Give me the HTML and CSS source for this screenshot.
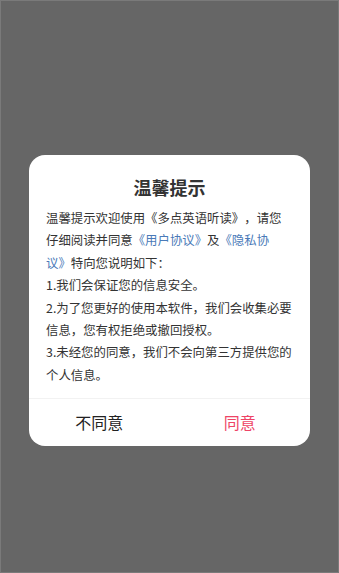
FILE: index.html
```html
<!DOCTYPE html>
<html lang="zh">
<head>
<meta charset="utf-8">
<link rel="stylesheet" href="styles.css">
</head>
<body>
<div class="screen">
  <div class="dialog">
    <h1 class="title">温馨提示</h1>
    <div class="content">
      <p class="para">温馨提示欢迎使用《多点英语听读》，请您仔细阅读并同意<span class="link">《用户协议》</span>及<span class="link">《隐私协议》</span>特向您说明如下：</p>
      <p class="para">1.我们会保证您的信息安全。</p>
      <p class="para">2.为了您更好的使用本软件，我们会收集必要信息，您有权拒绝或撤回授权。</p>
      <p class="para">3.未经您的同意，我们不会向第三方提供您的个人信息。</p>
    </div>
    <div class="actions">
      <div class="btn btn-cancel">不同意</div>
      <div class="btn btn-ok">同意</div>
    </div>
  </div>
</div>
</body>
</html>
```
FILE: styles.css
```css
* { box-sizing: border-box; }
html, body { margin: 0; padding: 0; }
body {
  width: 339px;
  height: 573px;
  background: #666666;
  font-family: "Noto Sans CJK SC", "Noto Sans", sans-serif;
  overflow: hidden;
}
.screen {
  width: 339px;
  height: 573px;
  border: 1px solid #7a7a7a;
  background: #666666;
  padding: 154px 0 0 28px;
}
.dialog {
  width: 281px;
  background: #ffffff;
  border-radius: 16px;
  overflow: hidden;
  display: flex;
  flex-direction: column;
}
.title {
  margin: 0;
  padding-top: 20px;
  font-size: 18px;
  line-height: 24px;
  font-weight: bold;
  color: #333333;
  text-align: center;
}
.content {
  padding: 8px 16.6px 12px 17px;
  text-spacing-trim: space-all;
  font-kerning: none;
  font-feature-settings: "kern" 0, "halt" 0, "palt" 0;
}
.para {
  margin: 0;
  font-size: 12.4px;
  line-height: 22.4px;
  color: #333333;
}
.link { color: #4a7ab8; }
.actions {
  display: flex;
  border-top: 1px solid #f2f2f2;
  height: 48px;
}
.btn {
  flex: 1;
  display: flex;
  align-items: center;
  justify-content: center;
  font-size: 16px;
  padding-bottom: 2px;
}
.btn-cancel { color: #222222; }
.btn-ok { color: #ee4466; }
```
